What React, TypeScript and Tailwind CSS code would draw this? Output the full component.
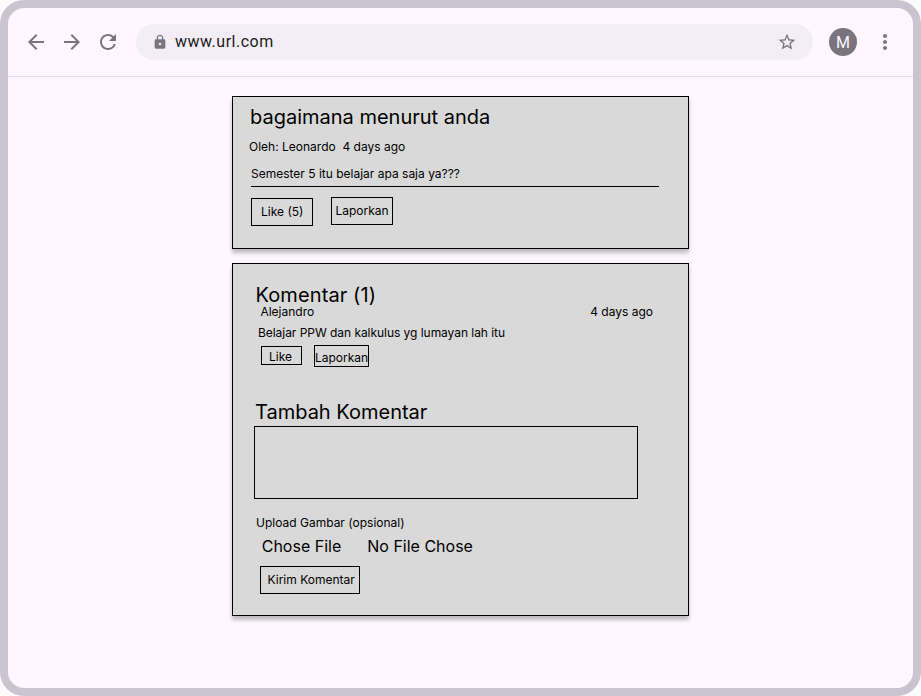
import type { ReactNode } from "react";
import {
  MdArrowBack,
  MdArrowForward,
  MdLock,
  MdMoreVert,
  MdRefresh,
  MdStarBorder,
} from "react-icons/md";

function BrowserBar() {
  return (
    <header className="flex h-[69px] shrink-0 items-center border-b border-[#e6e0e9] pl-4 pr-4 text-[#79747e]">
      <div className="flex gap-3">
        <MdArrowBack size={24} />
        <MdArrowForward size={24} />
        <MdRefresh size={24} />
      </div>
      <div className="ml-4 flex h-9 w-[677px] items-center rounded-full bg-[#f3edf7] pl-[15.5px] pr-4">
        <MdLock size={16} />
        <span className="ml-[7.5px] flex-1 font-['Roboto',sans-serif] text-base tracking-[0.5px] text-[#1d1b20]">
          www.url.com
        </span>
        <MdStarBorder size={20} />
      </div>
      <div className="ml-4 flex size-7 items-center justify-center rounded-full bg-[#79747e] pt-px font-['Roboto',sans-serif] text-base text-[#fef7ff]">
        M
      </div>
      <MdMoreVert size={24} className="ml-4" />
    </header>
  );
}

function Card({ className, children }: { className: string; children: ReactNode }) {
  return (
    <section
      className={
        "flex w-[457px] shrink-0 flex-col items-start border border-black bg-[#d9d9d9] shadow-[0_4px_4px_rgba(0,0,0,0.25)] " +
        className
      }
    >
      {children}
    </section>
  );
}

function Button({ className, children }: { className: string; children: ReactNode }) {
  return (
    <button className={"flex items-start whitespace-nowrap border border-black leading-[15px] " + className}>
      {children}
    </button>
  );
}

export default function App() {
  return (
    <div className="h-[696px] w-[921px] overflow-hidden bg-[#fcfcfc]">
      <div className="flex h-full flex-col rounded-[24px] border-8 border-[#cac4d0] bg-[#fef7ff]">
        <BrowserBar />
        <main className="flex flex-col pl-[224px] pt-[19px] font-['Inter',sans-serif] text-xs leading-[15px] text-black">
          <Card className="h-[153px] pl-4">
            <h1 className="ml-[1px] mt-2 text-xl leading-6">bagaimana menurut anda</h1>
            <p className="mt-[10px] whitespace-pre">Oleh: Leonardo  4 days ago</p>
            <p className="ml-[2px] mt-3">Semester 5 itu belajar apa saja ya???</p>
            <hr className="ml-[2px] mt-[5px] w-[408px] border-t border-black" />
            <div className="ml-[2px] mt-[10px] flex items-start gap-[18px]">
              <Button className="mt-px h-7 w-[62px] pl-[9px] pt-[5px]">Like (5)</Button>
              <Button className="h-7 w-[62px] pl-[3.5px] pt-[5px]">Laporkan</Button>
            </div>
          </Card>

          <Card className="mt-[14px] h-[353px] pl-[21px]">
            <h2 className="ml-[1.5px] mt-[19px] text-xl leading-6 tracking-[0.1px]">Komentar (1)</h2>
            <div className="-mt-[3px] ml-[6.4px] flex w-[392.6px] justify-between">
              <span>Alejandro</span>
              <span>4 days ago</span>
            </div>
            <p className="ml-1 mt-[6px] tracking-[-0.045px]">Belajar PPW dan kalkulus yg lumayan lah itu</p>
            <div className="ml-[7px] mt-[5px] flex items-start gap-3">
              <Button className="mt-px h-[19px] w-[41px] pl-[7px] pt-[2px]">Like</Button>
              <Button className="h-[22px] w-[55px] pt-1">Laporkan</Button>
            </div>
            <h2 className="ml-[1px] mt-[33px] text-xl leading-6">Tambah Komentar</h2>
            <textarea className="mt-[2px] h-[73px] w-[384px] resize-none border border-black" />
            <p className="ml-[2px] mt-4">Upload Gambar (opsional)</p>
            <div className="ml-[7.7px] mt-[7px] flex gap-[26px] text-base leading-[19px]">
              <span>Chose File</span>
              <span>No File Chose</span>
            </div>
            <Button className="ml-[6px] mt-[10px] h-7 w-[100px] pl-[6.5px] pt-[5px]">Kirim Komentar</Button>
          </Card>
        </main>
      </div>
    </div>
  );
}
